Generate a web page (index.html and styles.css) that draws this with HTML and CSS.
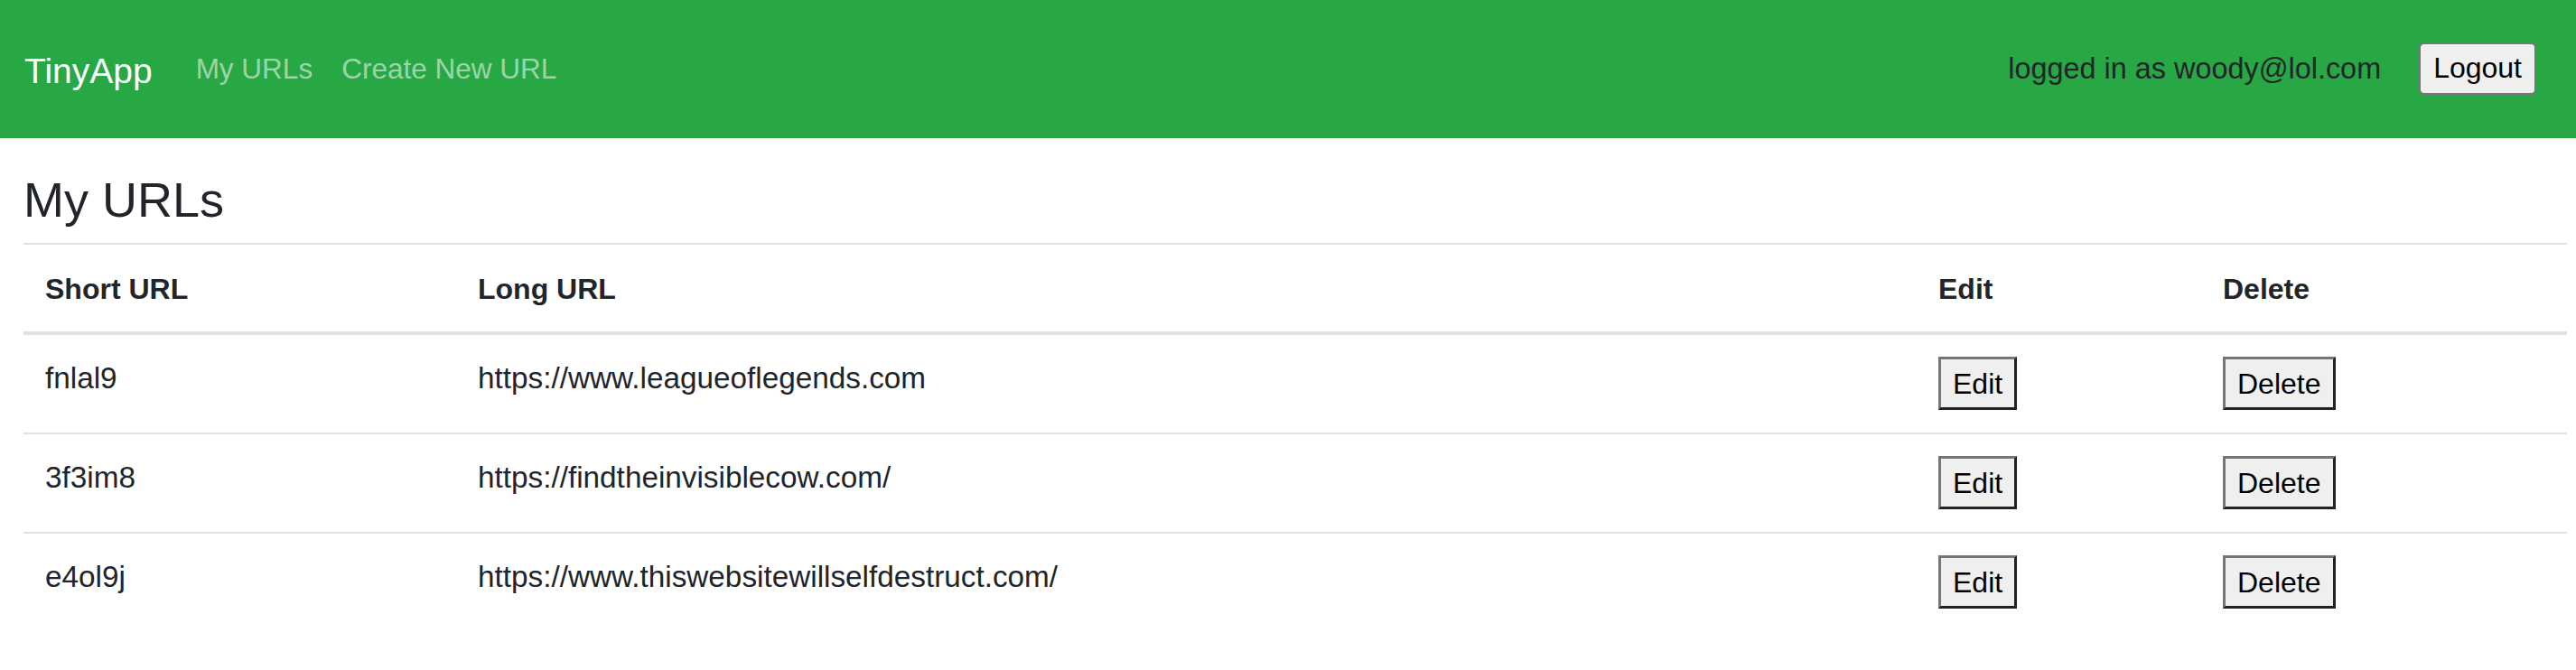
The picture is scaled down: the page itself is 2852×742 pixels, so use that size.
FILE: index.html
```html
<!DOCTYPE html>
<html lang="en">
<head>
<meta charset="utf-8">
<title>TinyApp</title>
<link rel="stylesheet" href="styles.css">
</head>
<body>
<nav class="navbar">
  <a class="brand" href="#">TinyApp</a>
  <a class="nav-link" href="#">My URLs</a>
  <a class="nav-link" href="#">Create New URL</a>
  <div class="nav-right">
    <span class="logged">logged in as woody@lol.com</span>
    <button class="logout" type="button">Logout</button>
  </div>
</nav>
<main class="container">
  <h1 class="title">My URLs</h1>
  <table class="urls">
    <colgroup>
      <col class="c-short">
      <col class="c-long">
      <col class="c-edit">
      <col class="c-del">
    </colgroup>
    <thead>
      <tr><th>Short URL</th><th>Long URL</th><th>Edit</th><th>Delete</th></tr>
    </thead>
    <tbody>
      <tr>
        <td>fnlal9</td>
        <td>https://www.leagueoflegends.com</td>
        <td><button class="btn" type="button">Edit</button></td>
        <td><button class="btn" type="button">Delete</button></td>
      </tr>
      <tr>
        <td>3f3im8</td>
        <td>https://findtheinvisiblecow.com/</td>
        <td><button class="btn" type="button">Edit</button></td>
        <td><button class="btn" type="button">Delete</button></td>
      </tr>
      <tr>
        <td>e4ol9j</td>
        <td>https://www.thiswebsitewillselfdestruct.com/</td>
        <td><button class="btn" type="button">Edit</button></td>
        <td><button class="btn" type="button">Delete</button></td>
      </tr>
    </tbody>
  </table>
</main>
</body>
</html>
```
FILE: styles.css
```css
* { box-sizing: border-box; }
html, body {
  margin: 0;
  padding: 0;
  background: #ffffff;
  font-family: "Liberation Sans", Arial, sans-serif;
  color: #212529;
}
.navbar {
  display: flex;
  align-items: center;
  height: 153px;
  background: #28a745;
  padding: 0 44px 0 27px;
}
.brand {
  font-size: 39px;
  line-height: 39px;
  padding-top: 3px;
  color: #ffffff;
  text-decoration: none;
  margin-right: 32px;
}
.nav-link {
  font-size: 31.5px;
  line-height: 31px;
  padding: 0 16px;
  color: rgba(255, 255, 255, 0.55);
  text-decoration: none;
}
.nav-right {
  margin-left: auto;
  display: flex;
  align-items: center;
}
.logged {
  font-size: 32.4px;
  line-height: 33px;
  color: #212529;
  margin-right: 42px;
}
.logout {
  font-family: "Liberation Sans", Arial, sans-serif;
  font-size: 32px;
  height: 58px;
  padding: 0 14px;
  margin-bottom: 2px;
  background: #efefef;
  color: #000000;
  border: 2px solid #767676;
  border-radius: 6px;
}
.container {
  padding: 0 10px 0 26px;
}
.title {
  font-size: 54px;
  line-height: 65px;
  font-weight: normal;
  margin: 36px 0 15px;
  color: #212529;
}
.urls {
  width: 100%;
  table-layout: fixed;
  border-collapse: separate;
  border-spacing: 0;
  font-size: 32px;
  line-height: 48px;
}
.c-short { width: 479px; }
.c-long { width: 1617px; }
.c-edit { width: 315px; }
.c-del { width: 405px; }
.urls th {
  text-align: left;
  font-weight: bold;
  vertical-align: bottom;
  padding: 25px 24px 23px;
  border-top: 2px solid #dee2e6;
  border-bottom: 4px solid #dee2e6;
}
.urls td {
  font-size: 33.3px;
  vertical-align: top;
  padding: 24px 24px 25px;
  border-top: 2px solid #dee2e6;
  white-space: nowrap;
}
.urls tbody tr:first-child td {
  border-top: 0;
}
.btn {
  display: block;
  font-family: "Liberation Sans", Arial, sans-serif;
  font-size: 32px;
  line-height: 1;
  height: 59px;
  padding: 0 13px;
  background: #efefef;
  color: #000000;
  border-style: solid;
  border-width: 3px;
  border-color: #767676 #222222 #222222 #767676;
  border-radius: 0;
}
```
